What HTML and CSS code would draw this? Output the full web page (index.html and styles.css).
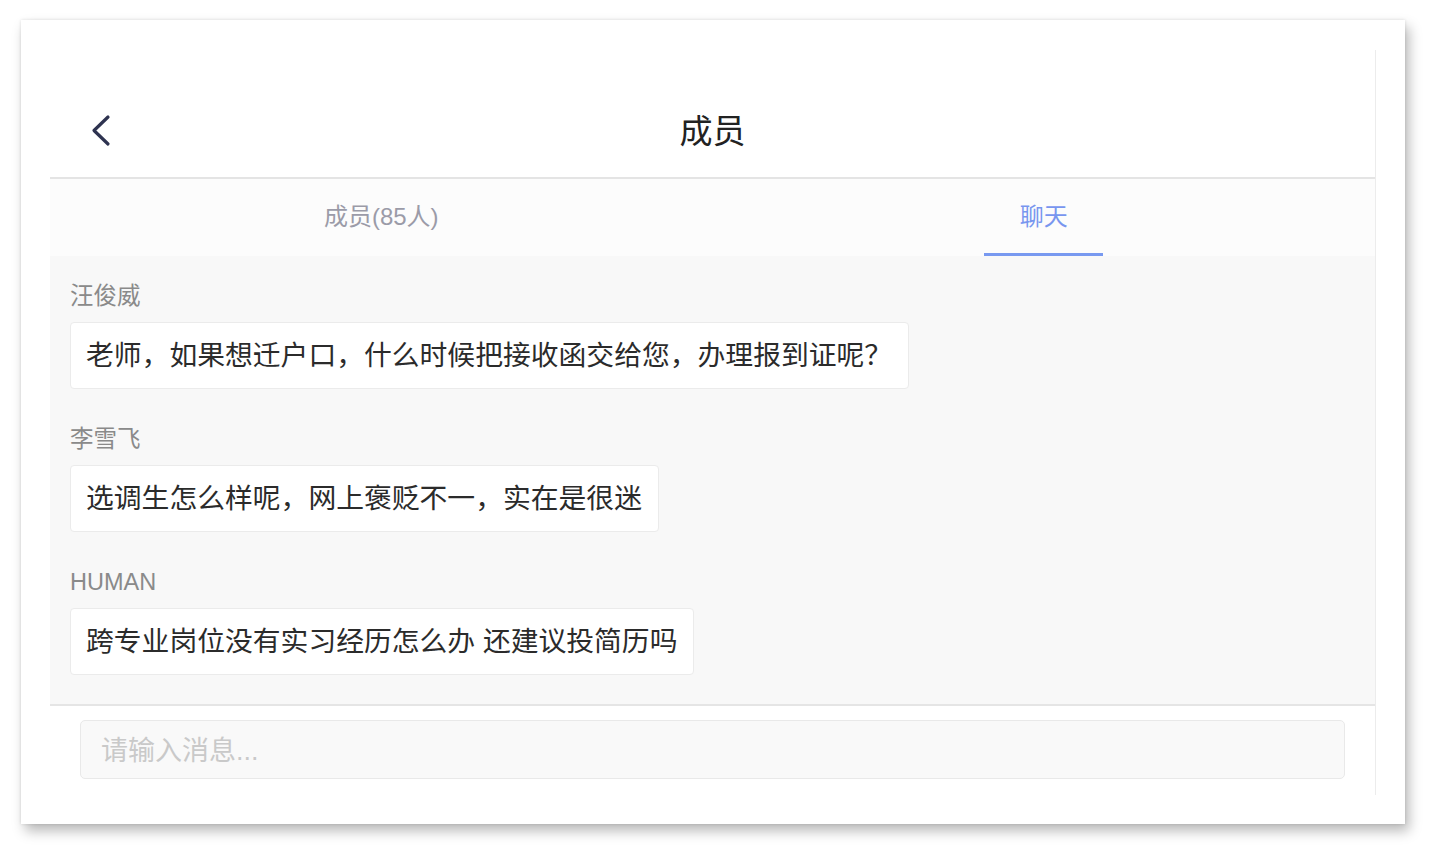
FILE: index.html
```html
<!DOCTYPE html>
<html lang="zh-CN">
<head>
<meta charset="utf-8">
<title>成员</title>
<link rel="stylesheet" href="styles.css">
</head>
<body>
<div class="window">
  <div class="app">
    <header class="nav">
      <div class="nav-left">
        <svg class="back" width="22" height="34" viewBox="0 0 22 34" aria-hidden="true">
          <path d="M17 3 L3 16.5 L17 30" fill="none" stroke="#2e3350" stroke-width="3.2" stroke-linecap="round" stroke-linejoin="round"/>
        </svg>
      </div>
      <h1 class="title">成员</h1>
      <div class="nav-right"></div>
    </header>
    <nav class="tabs">
      <div class="tab">
        <span class="tab-label">成员(85人)</span>
        <span class="tab-bar"></span>
      </div>
      <div class="tab active">
        <span class="tab-label">聊天</span>
        <span class="tab-bar"></span>
      </div>
    </nav>
    <main class="messages">
      <div class="msg">
        <div class="name">汪俊威</div>
        <div class="bubble">老师，如果想迁户口，什么时候把接收函交给您，办理报到证呢？</div>
      </div>
      <div class="msg">
        <div class="name">李雪飞</div>
        <div class="bubble">选调生怎么样呢，网上褒贬不一，实在是很迷</div>
      </div>
      <div class="msg">
        <div class="name">HUMAN</div>
        <div class="bubble">跨专业岗位没有实习经历怎么办 还建议投简历吗</div>
      </div>
    </main>
    <footer class="composer">
      <input class="input" type="text" placeholder="请输入消息...">
    </footer>
  </div>
</div>
</body>
</html>
```

FILE: styles.css
```css
* { box-sizing: border-box; }

html, body {
  margin: 0;
  padding: 0;
  background: #ffffff;
  width: 1434px;
  height: 859px;
  overflow: hidden;
  font-family: "Liberation Sans", "Noto Sans CJK SC", sans-serif;
}

.window {
  margin: 20px 0 0 21px;
  width: 1384px;
  height: 804px;
  background: #ffffff;
  padding: 30px 29px 29px 29px;
  box-shadow: 4px 7px 12px rgba(0, 0, 0, 0.28), 0 0 3px rgba(0, 0, 0, 0.12);
}

.app {
  width: 1326px;
  height: 745px;
  display: flex;
  flex-direction: column;
  border-right: 1px solid #ececec;
}

.nav {
  height: 129px;
  display: grid;
  grid-template-columns: 1fr auto 1fr;
  align-items: start;
  padding-top: 55px;
  border-bottom: 2px solid #e4e4e4;
  background: #ffffff;
}

.nav-left {
  padding-left: 41px;
  padding-top: 9px;
  display: flex;
}

.back { display: block; }

.title {
  margin: 0;
  font-size: 33px;
  line-height: 48px;
  font-weight: 400;
  color: #222222;
  font-family: "Noto Sans CJK SC", sans-serif;
}

.tabs {
  height: 77px;
  display: grid;
  grid-template-columns: 1fr 1fr;
  background: #fcfcfc;
}

.tab {
  display: flex;
  flex-direction: column;
  align-items: center;
  padding-top: 24px;
}

.tab-label {
  font-size: 24px;
  line-height: 28px;
  color: #9b9ba8;
}

.tab-bar {
  margin-top: 22px;
  width: 119px;
  height: 3px;
  background: transparent;
}

.tab.active .tab-label { color: #7896ef; }
.tab.active .tab-bar { background: #7899f0; }

.messages {
  flex: 1;
  background: #f8f8f8;
  padding: 22px 20px 0 20px;
  display: flex;
  flex-direction: column;
  align-items: flex-start;
  gap: 32px;
  border-bottom: 2px solid #e5e5e5;
}

.msg {
  display: flex;
  flex-direction: column;
  align-items: flex-start;
  gap: 8px;
}

.name {
  font-size: 23.5px;
  line-height: 36px;
  color: #8a8a8a;
}

.bubble {
  background: #ffffff;
  border: 1px solid #ebebeb;
  border-radius: 4px;
  padding: 12px 16px 12px 15px;
  font-size: 27.8px;
  line-height: 41px;
  color: #2b2b2b;
  white-space: nowrap;
}

.composer {
  height: 89px;
  background: #ffffff;
  padding: 14px 30px 16px 30px;
}

.input {
  display: block;
  width: 100%;
  height: 59px;
  margin: 0;
  background: #f9f9f9;
  border: 1px solid #e9e9e9;
  border-radius: 5px;
  padding: 4px 20px 0 20px;
  font-family: "Liberation Sans", "Noto Sans CJK SC", sans-serif;
  font-size: 27px;
  color: #333333;
  outline: none;
}

.input::placeholder { color: #c9c9c9; }
```
